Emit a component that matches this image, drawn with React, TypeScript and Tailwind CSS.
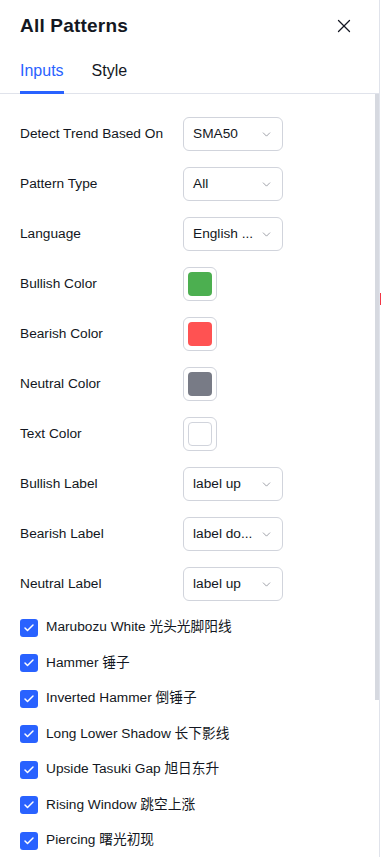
import { X, ChevronDown, Check } from "lucide-react";

const font = { fontFamily: '"Liberation Sans", "Noto Sans CJK SC", sans-serif' };

type Row =
  | { label: string; kind: "select"; value: string }
  | { label: string; kind: "color"; swatch: string };

const rows: Row[] = [
  { label: "Detect Trend Based On", kind: "select", value: "SMA50" },
  { label: "Pattern Type", kind: "select", value: "All" },
  { label: "Language", kind: "select", value: "English ..." },
  { label: "Bullish Color", kind: "color", swatch: "bg-[#4caf50]" },
  { label: "Bearish Color", kind: "color", swatch: "bg-[#ff5252]" },
  { label: "Neutral Color", kind: "color", swatch: "bg-[#787b86]" },
  { label: "Text Color", kind: "color", swatch: "bg-white border border-[#d1d4dc]" },
  { label: "Bullish Label", kind: "select", value: "label up" },
  { label: "Bearish Label", kind: "select", value: "label do..." },
  { label: "Neutral Label", kind: "select", value: "label up" },
];

const patterns = [
  "Marubozu White 光头光脚阳线",
  "Hammer 锤子",
  "Inverted Hammer 倒锤子",
  "Long Lower Shadow 长下影线",
  "Upside Tasuki Gap 旭日东升",
  "Rising Window 跳空上涨",
  "Piercing 曙光初现",
];

export default function App() {
  return (
    <div className="flex h-[857px] w-[381px] overflow-hidden bg-white text-[#131722]" style={font}>
      <div className="flex w-[380px] shrink-0 flex-col border-r border-[#e0e3eb]">
        {/* header */}
        <div className="flex h-[52px] shrink-0 items-center justify-between pl-5 pr-[24px]">
          <h2 className="text-[19px] font-semibold tracking-[0.2px]">All Patterns</h2>
          <X className="h-[22px] w-[22px] text-[#131722]" strokeWidth={1.4} />
        </div>
        <div className="flex h-[42px] shrink-0 gap-7 border-b border-[#e0e3eb] pl-5">
          <div className="relative flex items-start pt-[7px] text-[16px] text-[#2962ff]">
            Inputs
            <span className="absolute bottom-[-1px] left-0 h-[3px] w-full bg-[#2962ff]" />
          </div>
          <div className="flex items-start pt-[7px] text-[16px]">Style</div>
        </div>

        {/* body */}
        <div className="flex min-h-0 flex-1">
          <div className="flex flex-1 flex-col">
            <div className="flex flex-col gap-4 pl-5 pt-[23px]">
              {rows.map((r) => (
                <div key={r.label} className="flex h-[34px] items-center">
                  <span className="w-[163px] text-[13.7px]">{r.label}</span>
                  {r.kind === "select" ? (
                    <div className="flex h-[34px] w-[100px] items-center justify-between rounded-[6px] border border-[#d1d4dc] pl-[9px] pr-[9px] text-[13.7px]">
                      <span>{r.value}</span>
                      <ChevronDown className="h-[13px] w-[13px] text-[#787b86]" strokeWidth={1.3} />
                    </div>
                  ) : (
                    <div className="flex h-[34px] w-[34px] items-center justify-center rounded-[6px] border border-[#d1d4dc]">
                      <div className={`h-[24px] w-[24px] rounded-[4px] ${r.swatch}`} />
                    </div>
                  )}
                </div>
              ))}
            </div>
            <div className="flex flex-col pl-5 pt-[9px]">
              {patterns.map((p) => (
                <div key={p} className="flex h-[35.5px] items-center gap-[8px]">
                  <span className="flex h-[18px] w-[18px] items-center justify-center rounded-[3px] bg-[#2962ff]">
                    <Check className="h-[12px] w-[12px] text-white" strokeWidth={3} />
                  </span>
                  <span className="text-[13.7px]">{p}</span>
                </div>
              ))}
            </div>
          </div>
          {/* scrollbar */}
          <div className="w-[4px] shrink-0">
            <div className="h-[606px] w-[4px] bg-[#d6d9e0]" />
          </div>
        </div>
      </div>
      <div className="w-px shrink-0 pt-[293px]">
        <div className="h-[12px] w-px bg-[#f23645]" />
      </div>
    </div>
  );
}
